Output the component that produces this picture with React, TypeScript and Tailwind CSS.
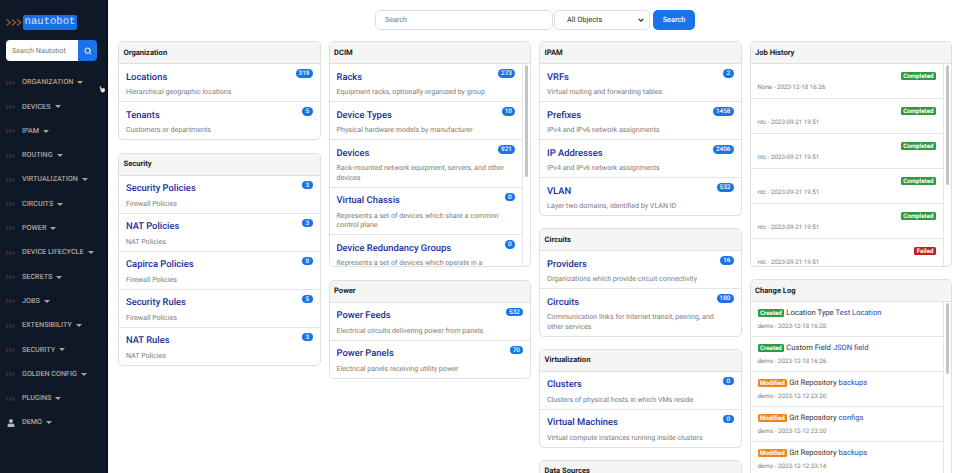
import { Search } from 'lucide-react';
import { FaUser } from 'react-icons/fa';

const navItems = [
  'ORGANIZATION', 'DEVICES', 'IPAM', 'ROUTING', 'VIRTUALIZATION', 'CIRCUITS', 'POWER', 'DEVICE LIFECYCLE',
  'SECRETS', 'JOBS', 'EXTENSIBILITY', 'SECURITY', 'GOLDEN CONFIG', 'PLUGINS',
];

type Row = { title: string; desc: string; count: number };

const organization: Row[] = [
  { title: 'Locations', desc: 'Hierarchical geographic locations', count: 319 },
  { title: 'Tenants', desc: 'Customers or departments', count: 5 },
];
const security: Row[] = [
  { title: 'Security Policies', desc: 'Firewall Policies', count: 3 },
  { title: 'NAT Policies', desc: 'NAT Policies', count: 3 },
  { title: 'Capirca Policies', desc: 'Firewall Policies', count: 0 },
  { title: 'Security Rules', desc: 'Firewall Policies', count: 5 },
  { title: 'NAT Rules', desc: 'NAT Policies', count: 3 },
];
const dcim: Row[] = [
  { title: 'Racks', desc: 'Equipment racks, optionally organized by group', count: 273 },
  { title: 'Device Types', desc: 'Physical hardware models by manufacturer', count: 10 },
  { title: 'Devices', desc: 'Rack-mounted network equipment, servers, and other devices', count: 921 },
  { title: 'Virtual Chassis', desc: 'Represents a set of devices which share a common control plane', count: 0 },
  { title: 'Device Redundancy Groups', desc: 'Represents a set of devices which operate in a redundancy group', count: 0 },
];
const power: Row[] = [
  { title: 'Power Feeds', desc: 'Electrical circuits delivering power from panels', count: 532 },
  { title: 'Power Panels', desc: 'Electrical panels receiving utility power', count: 70 },
];
const ipam: Row[] = [
  { title: 'VRFs', desc: 'Virtual routing and forwarding tables', count: 2 },
  { title: 'Prefixes', desc: 'IPv4 and IPv6 network assignments', count: 1458 },
  { title: 'IP Addresses', desc: 'IPv4 and IPv6 network assignments', count: 2406 },
  { title: 'VLAN', desc: 'Layer two domains, identified by VLAN ID', count: 532 },
];
const circuits: Row[] = [
  { title: 'Providers', desc: 'Organizations which provide circuit connectivity', count: 16 },
  { title: 'Circuits', desc: 'Communication links for Internet transit, peering, and other services', count: 180 },
];
const virtualization: Row[] = [
  { title: 'Clusters', desc: 'Clusters of physical hosts in which VMs reside', count: 0 },
  { title: 'Virtual Machines', desc: 'Virtual compute instances running inside clusters', count: 0 },
];
const jobs = [
  { who: 'None', at: '2023-12-18 16:26', status: 'Completed' },
  { who: 'ntc', at: '2023-09-21 19:51', status: 'Completed' },
  { who: 'ntc', at: '2023-09-21 19:51', status: 'Completed' },
  { who: 'ntc', at: '2023-09-21 19:51', status: 'Completed' },
  { who: 'ntc', at: '2023-09-21 19:51', status: 'Completed' },
  { who: 'ntc', at: '2023-09-21 19:51', status: 'Failed' },
];
const changes = [
  { action: 'Created', type: 'Location Type', name: 'Test Location', at: '2023-12-18 16:28' },
  { action: 'Created', type: 'Custom Field', name: 'JSON field', at: '2023-12-18 16:26' },
  { action: 'Modified', type: 'Git Repository', name: 'backups', at: '2023-12-12 23:20' },
  { action: 'Modified', type: 'Git Repository', name: 'configs', at: '2023-12-12 23:20' },
  { action: 'Modified', type: 'Git Repository', name: 'backups', at: '2023-12-12 23:14' },
];

function Chevrons({ className }: { className: string }) {
  return (
    <svg viewBox="0 0 30 12" fill="none" stroke="currentColor" strokeWidth="2.4" preserveAspectRatio="none" className={className}>
      <path d="M1 1l7 5-7 5M11 1l7 5-7 5M21 1l7 5-7 5" />
    </svg>
  );
}

function Caret() {
  return <span className="ml-[4px] border-x-[3.5px] border-t-[3.5px] border-x-transparent border-t-current" />;
}

function Card({ title, className, children }: { title: string; className?: string; children?: React.ReactNode }) {
  return (
    <div className={`rounded-[5px] border border-[#dfdfdf] bg-white overflow-hidden ${className ?? ''}`}>
      <div className="h-[22px] flex items-center px-[4.5px] bg-[#f5f5f5] border-b border-[#e0e0e0] text-[7.6px] font-bold text-[#1b1b1b]">
        {title}
      </div>
      {children}
    </div>
  );
}

function Rows({ rows }: { rows: Row[] }) {
  return (
    <div>
      {rows.map((r) => (
        <div key={r.title} className="relative px-[7px] pt-[6.5px] pb-[4.5px] border-b border-[#e3e3e3] last:border-b-0">
          <span className="absolute right-[7px] top-[5px] h-[8.5px] min-w-[10.5px] px-[3px] rounded-full bg-[#1b73ea] text-white text-[6.4px] font-medium leading-[8.5px] text-center">
            {r.count}
          </span>
          <div className="text-[9.4px] leading-[14px] font-medium text-[#19309c]">{r.title}</div>
          <div className="mt-[2.5px] pr-[3px] text-[7.1px] leading-[9.5px] text-[#7c7c7c]">{r.desc}</div>
        </div>
      ))}
    </div>
  );
}

function Scrollbar({ thumb }: { thumb: string }) {
  return (
    <div className="w-[8px] shrink-0 pl-[2px] pr-[2px] pt-[1px] border-l border-[#e6e6e6]">
      <div className={`rounded-full bg-[#c4c4c4] ${thumb}`} />
    </div>
  );
}

function Tag({ label }: { label: string }) {
  const color = label === 'Failed' ? 'bg-[#c2201f]' : label === 'Modified' ? 'bg-[#f0851d]' : 'bg-[#2f9a3e]';
  return (
    <span className={`inline-block h-[8.5px] px-[2.5px] rounded-[1.5px] text-white text-[6.2px] font-bold leading-[8.5px] ${color}`}>
      {label}
    </span>
  );
}

export default function App() {
  return (
    <div className="relative h-[473px] flex overflow-hidden bg-white font-['Roboto',sans-serif] [text-rendering:geometricPrecision]">
      <aside className="w-[108px] shrink-0 bg-[#0f1826] border-r border-[#05070a]">
        <div className="h-[40px] pt-[15px] pl-[6px] flex items-start">
          <Chevrons className="w-[16px] h-[7px] mt-[4px] text-[#8a5a33]" />
          <span className="ml-[1px] h-[15px] w-[54px] rounded-[2px] bg-[#1b6fe6] text-center text-[10.6px] leading-[15px] text-[#d5e6fb] font-['Liberation_Mono',monospace]">
            nautobot
          </span>
        </div>
        <div className="mx-[6px] h-[21px] flex">
          <div className="w-[72px] rounded-l-[4px] bg-white pl-[6px] text-[7.2px] leading-[21px] text-[#777]">Search Nautobot</div>
          <div className="w-[19px] rounded-r-[4px] bg-[#1b73ea] flex items-center justify-center">
            <Search className="w-[8px] h-[8px] text-white" strokeWidth={3} />
          </div>
        </div>
        <nav className="mt-[9.5px] text-[#aca59d] text-[7.2px] font-medium">
          {navItems.map((n, i) => (
            <div key={n} className={`h-[24.3px] flex items-center pl-[6px] ${i === 0 ? 'text-[#bda07e]' : ''}`}>
              <Chevrons className="w-[9px] h-[4px] mr-[7px] text-[#7a4f2d]" />
              {n}
              <Caret />
            </div>
          ))}
          <div className="h-[24.3px] flex items-center pl-[6px]">
            <FaUser className="w-[8px] h-[8px] ml-[1px] mr-[7px] text-[#b5b5b5]" />
            DEMO
            <Caret />
          </div>
        </nav>
      </aside>

      <main className="flex-1 min-w-0 pl-[10px] pr-[8px] pt-[10px]">
        <div className="h-[20px] flex justify-center">
          <div className="w-[178px] rounded-[5px] border border-[#dedede] pl-[9px] text-[7.1px] leading-[18px] text-[#777]">Search</div>
          <div className="ml-[1px] w-[96px] rounded-[5px] border border-[#dedede] pl-[12px] flex items-center justify-between pr-[5px] text-[7.4px] text-[#333]">
            All Objects
            <svg viewBox="0 0 10 6" className="w-[6px] h-[4px]" fill="none" stroke="#333" strokeWidth="2"><path d="M1 1l4 4 4-4" /></svg>
          </div>
          <div className="ml-[3px] w-[42px] rounded-[5px] bg-[#1b73ea] text-white text-[7.3px] font-medium leading-[20px] text-center">Search</div>
        </div>

        <div className="mt-[11px] grid grid-cols-4 gap-x-[8px] items-start">
          <div className="flex flex-col gap-[12.5px]">
            <Card title="Organization"><Rows rows={organization} /></Card>
            <Card title="Security"><Rows rows={security} /></Card>
          </div>

          <div className="flex flex-col gap-[12.5px]">
            <Card title="DCIM">
              <div className="flex h-[202px]">
                <div className="flex-1 min-w-0 overflow-hidden"><Rows rows={dcim} /></div>
                <Scrollbar thumb="h-[112px]" />
              </div>
            </Card>
            <Card title="Power"><Rows rows={power} /></Card>
          </div>

          <div className="flex flex-col gap-[12px]">
            <Card title="IPAM"><Rows rows={ipam} /></Card>
            <Card title="Circuits"><Rows rows={circuits} /></Card>
            <Card title="Virtualization"><Rows rows={virtualization} /></Card>
            <Card title="Data Sources" />
          </div>

          <div className="flex flex-col gap-[12px]">
            <Card title="Job History">
              <div className="flex h-[202px]">
                <div className="flex-1 min-w-0 overflow-hidden">
                  {jobs.map((j, i) => (
                    <div key={i} className="h-[35px] px-[7px] pt-[7.5px] border-b border-[#e3e3e3]">
                      <div className="flex justify-end h-[10px]"><Tag label={j.status} /></div>
                      <div className="mt-[1px] text-[6.2px] leading-[9px] text-[#7c7c7c]">{j.who} - {j.at}</div>
                    </div>
                  ))}
                </div>
                <Scrollbar thumb="h-[120px]" />
              </div>
            </Card>
            <Card title="Change Log">
              <div className="flex h-[180px]">
                <div className="flex-1 min-w-0 overflow-hidden">
                  {changes.map((c, i) => (
                    <div key={i} className="h-[35px] px-[7px] pt-[5px] border-b border-[#e3e3e3]">
                      <div className="flex items-center gap-[2px] h-[12px] text-[7.6px] text-[#333]">
                        <Tag label={c.action} />
                        <span>{c.type}</span>
                        <span className="text-[#2e46b0]">{c.name}</span>
                      </div>
                      <div className="mt-[3px] text-[6.2px] leading-[9px] text-[#7c7c7c]">demo - {c.at}</div>
                    </div>
                  ))}
                </div>
                <Scrollbar thumb="h-[71px]" />
              </div>
            </Card>
          </div>
        </div>
      </main>

      {/* mouse pointer captured in the screenshot */}
      <svg viewBox="0 0 8 9" className="absolute left-[99px] top-[85px] w-[7px] h-[9px]" fill="#e8e8e8" stroke="#111" strokeWidth="0.4">
        <path d="M1 .5c.6-.3 1 0 1.2.6l.7 2 2-.3c1.300-.1 2.200.6 2.200 1.800 0 1.700-.8 3.400-2.500 3.400-1.500 0-2.400-1-3-2.500L.8 1.600C.6 1.100.6.700 1 .5z" />
      </svg>
    </div>
  );
}
